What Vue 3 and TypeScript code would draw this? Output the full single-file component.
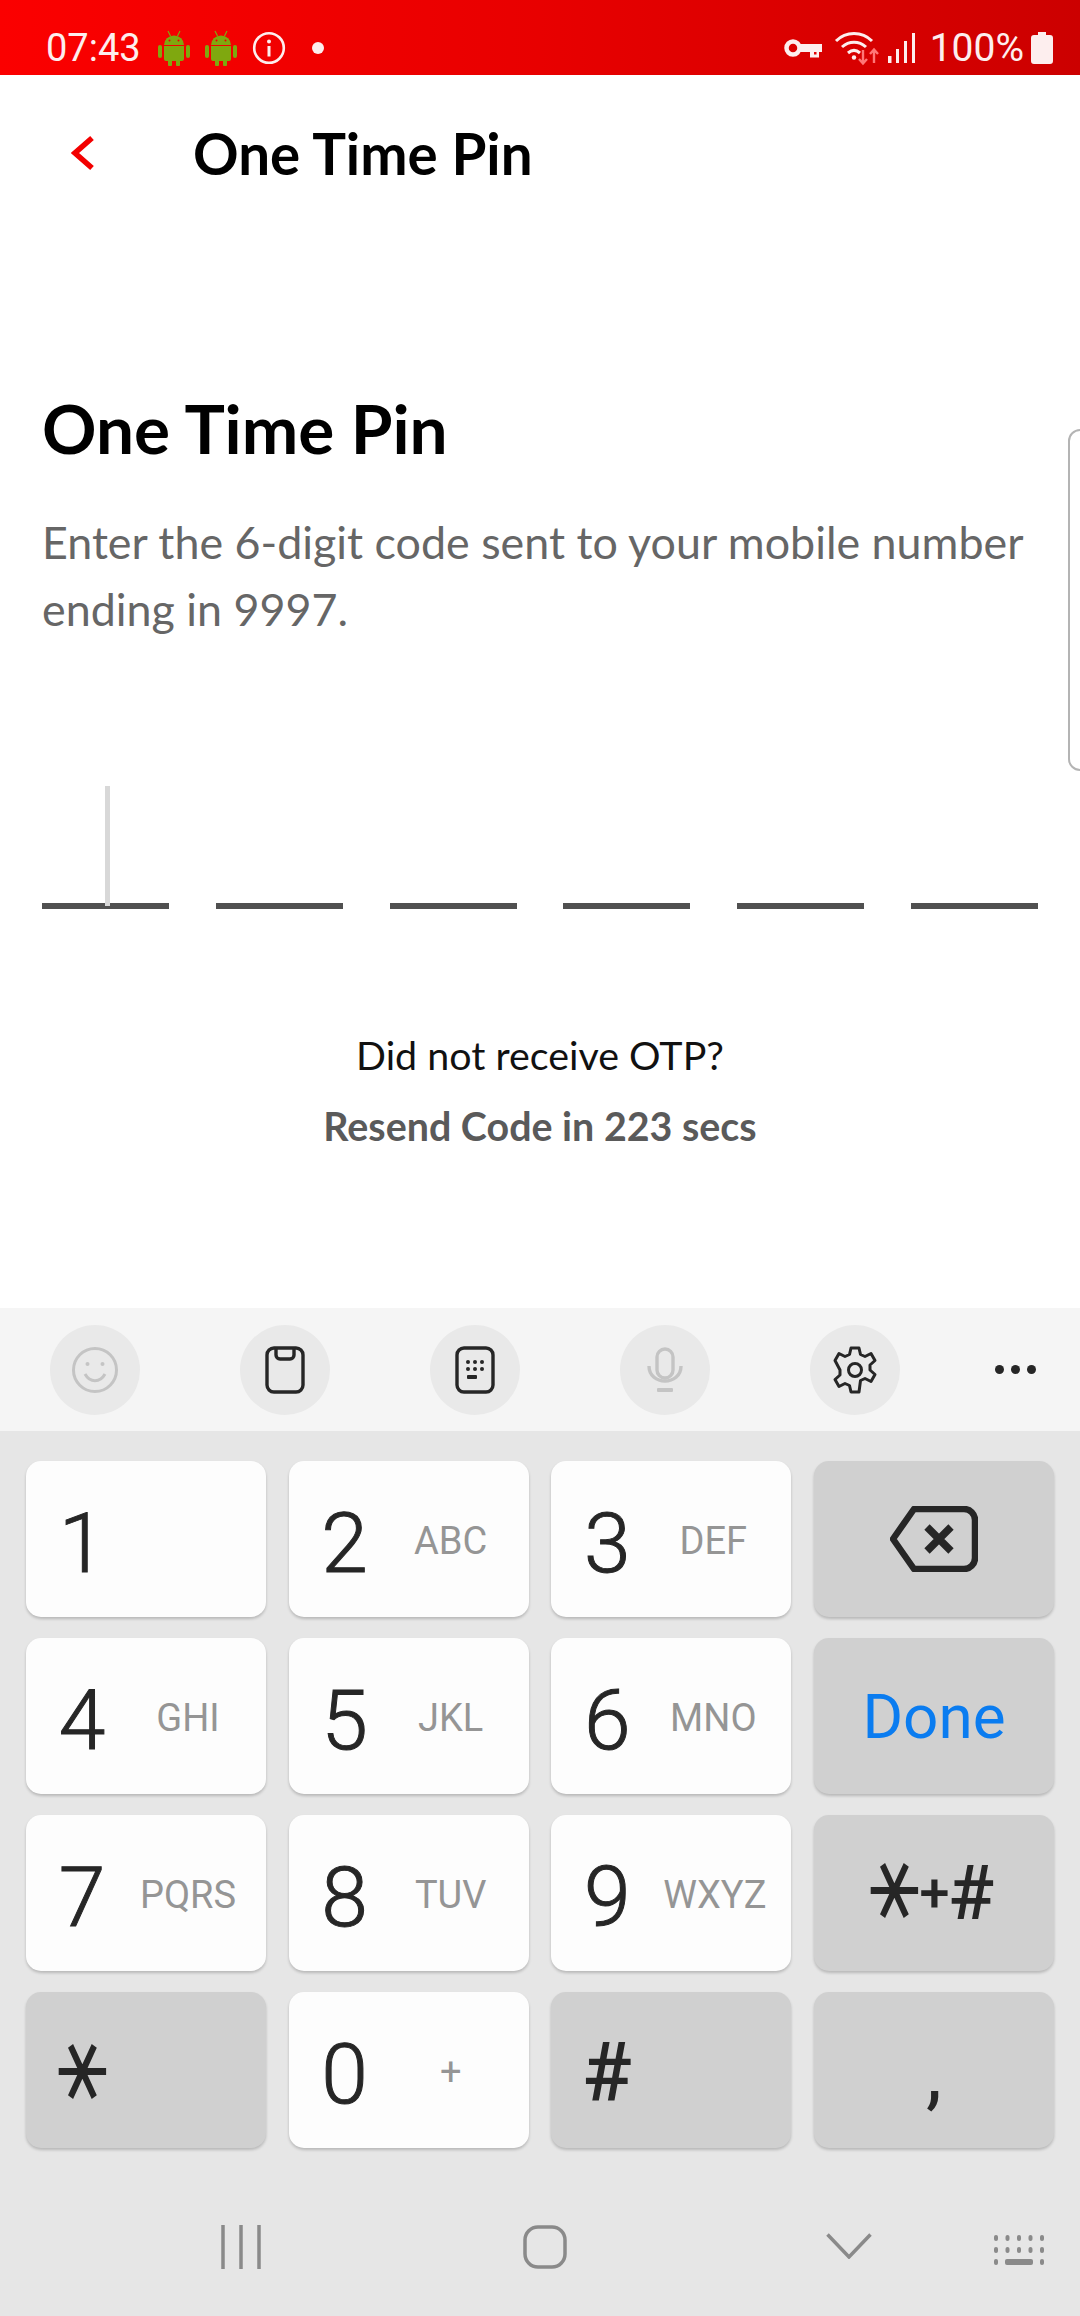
<script setup lang="ts">
interface Key { main: string; sub?: string }
const digitKeys: Key[] = [
  { main: '1' }, { main: '2', sub: 'ABC' }, { main: '3', sub: 'DEF' },
  { main: '4', sub: 'GHI' }, { main: '5', sub: 'JKL' }, { main: '6', sub: 'MNO' },
  { main: '7', sub: 'PQRS' }, { main: '8', sub: 'TUV' }, { main: '9', sub: 'WXYZ' },
]
const rows = digitKeys.reduce<Key[][]>((acc, k, i) => {
  if (i % 3 === 0) acc.push([])
  acc[acc.length - 1].push(k)
  return acc
}, [])
const slots = [0, 1, 2, 3, 4, 5]
</script>

<template>
  <div class="phone">
    <div class="status">
      <span class="time">07:43</span>
      <svg class="droid" viewBox="0 0 32 36" width="32" height="36" v-for="n in 2" :key="n">
        <path d="M10 1l2.500 5M22 1l-2.500 5" stroke="#7fa80f" stroke-width="1.200" fill="none" />
        <path d="M6 15a10 9.500 0 0 1 20 0z" fill="#7fa80f" />
        <circle cx="11.500" cy="10.500" r="1" fill="#e00" /><circle cx="20.500" cy="10.500" r="1" fill="#e00" />
        <path d="M6 16h20v13a2 2 0 0 1-2 2h-2v3.500a2 2 0 0 1-4 0V31h-4v3.500a2 2 0 0 1-4 0V31H8a2 2 0 0 1-2-2z" fill="#7fa80f" />
        <rect x="0" y="15" width="4" height="13" rx="2" fill="#7fa80f" /><rect x="28" y="15" width="4" height="13" rx="2" fill="#7fa80f" />
      </svg>
      <svg class="info" viewBox="0 0 34 34" width="34" height="34">
        <circle cx="17" cy="17" r="14.800" fill="none" stroke="#fdeeee" stroke-width="2.600" />
        <circle cx="17" cy="10.500" r="2" fill="#fdeeee" /><rect x="15.500" y="15" width="3" height="10.500" fill="#fdeeee" />
      </svg>
      <span class="dot"></span>
      <span class="grow"></span>
      <svg class="key-ic" viewBox="0 0 38 20" width="38" height="20">
        <circle cx="9" cy="10" r="6.500" fill="none" stroke="#fdeeee" stroke-width="4.500" />
        <path d="M15 6h23v8h-3v5.500h-9V14H15z" fill="#fdeeee" /><rect x="30" y="14" width="2.500" height="2.500" fill="#e20000" />
      </svg>
      <svg class="wifi" viewBox="0 0 46 36" width="46" height="36">
        <path d="M2 11C12 1 28 1 38 11M8 17c7-6.500 17-6.500 24 0M14 23c4-3.500 8-3.500 12 0" fill="none" stroke="#fdeeee" stroke-width="3" />
        <circle cx="20" cy="27.500" r="2.200" fill="#fdeeee" />
        <path d="M29 20v13M25 29l4 4.500 4-4.500M40 33V20M36 24l4-4.500 4 4.500" fill="none" stroke="#f77" stroke-width="2.400" />
      </svg>
      <svg class="signal" viewBox="0 0 28 32" width="28" height="32">
        <rect x="0" y="24" width="3.500" height="7" fill="#fdeeee" /><rect x="8" y="17" width="3" height="14" fill="#fdeeee" />
        <rect x="16" y="9" width="3" height="22" fill="#fdeeee" /><rect x="24" y="1" width="3" height="30" fill="#fdeeee" />
      </svg>
      <span class="pct">100%</span>
      <svg class="batt" viewBox="0 0 22 32" width="22" height="32">
        <path d="M7 0h8v3h4a3 3 0 0 1 3 3v23a3 3 0 0 1-3 3H3a3 3 0 0 1-3-3V6a3 3 0 0 1 3-3h4z" fill="#fdeeee" />
      </svg>
    </div>

    <header class="bar">
      <svg class="back" viewBox="0 0 24 36" width="24" height="36">
        <path d="M21 3L4 18l17 15" fill="none" stroke="#f30000" stroke-width="5.500" />
      </svg>
      <span class="bar-title">One Time Pin</span>
    </header>

    <main class="content">
      <h1 class="title">One Time Pin</h1>
      <p class="lead">Enter the 6-digit code sent to your mobile number<br />ending in 9997.</p>
      <div class="pins">
        <div class="pin" v-for="s in slots" :key="s"><i v-if="s === 0" class="caret"></i></div>
      </div>
      <p class="ask">Did not receive OTP?</p>
      <p class="resend">Resend Code in 223 secs</p>
      <div class="peek"></div>
    </main>

    <section class="kb">
      <div class="tools">
        <div class="slot"><span class="pill">
          <svg viewBox="0 0 46 48" width="46" height="48" fill="none" stroke="#c4c4c4" stroke-width="3">
            <circle cx="23" cy="24" r="21.500" /><path d="M13 28c5 9 15 9 20 0" />
            <circle cx="15.500" cy="18" r="2" fill="#c4c4c4" stroke="none" /><circle cx="30.500" cy="18" r="2" fill="#c4c4c4" stroke="none" />
          </svg></span></div>
        <div class="slot"><span class="pill">
          <svg viewBox="0 0 40 48" width="40" height="48" fill="none" stroke="#262626" stroke-width="3.400">
            <rect x="2" y="2" width="36" height="44" rx="7" /><path d="M11 2v7a4 4 0 0 0 4 4h10a4 4 0 0 0 4-4V2" />
          </svg></span></div>
        <div class="slot"><span class="pill">
          <svg viewBox="0 0 40 48" width="40" height="48" fill="none" stroke="#262626" stroke-width="3.400">
            <rect x="2" y="2" width="36" height="44" rx="7" />
            <g fill="#262626" stroke="none">
              <circle cx="13" cy="16" r="2" /><circle cx="20" cy="16" r="2" /><circle cx="27" cy="16" r="2" />
              <circle cx="13" cy="23" r="2" /><circle cx="20" cy="23" r="2" /><circle cx="27" cy="23" r="2" />
              <rect x="12" y="29" width="10" height="4" rx="1" />
            </g>
          </svg></span></div>
        <div class="slot"><span class="pill">
          <svg viewBox="0 0 36 46" width="36" height="46" fill="none" stroke="#c4c4c4" stroke-width="3.400">
            <rect x="10" y="2" width="16" height="29" rx="8" /><path d="M2 19c0 20 32 20 32 0" />
            <rect x="10" y="41" width="16" height="4" rx="1" fill="#c4c4c4" stroke="none" />
          </svg></span></div>
        <div class="slot"><span class="pill">
          <svg viewBox="0 0 48 48" width="48" height="48" fill="none" stroke="#262626" stroke-width="3">
            <path d="M20 2h8l1.500 6.500 4.500 2 6-3 4 7-5 4.500v5l5 4.500-4 7-6-3-4.500 2L28 46h-8l-1.500-6.500-4.500-2-6 3-4-7 5-4.500v-5L4 14.500l4-7 6 3 4.500-2z" stroke-linejoin="round" />
            <circle cx="24" cy="24" r="6.500" />
          </svg></span></div>
        <div class="slot more"><i></i><i></i><i></i></div>
      </div>

      <div class="grid">
        <template v-for="(row, ri) in rows" :key="ri">
          <button v-for="k in row" :key="k.main" class="key">
            <span class="n">{{ k.main }}</span><span class="s">{{ k.sub }}</span>
          </button>
          <button v-if="ri === 0" class="key dark center">
            <svg viewBox="0 0 88 66" width="88" height="66" fill="none" stroke="#262626" stroke-width="6.500" stroke-linejoin="round">
              <path d="M24 3h50a11 11 0 0 1 11 11v38a11 11 0 0 1-11 11H24L3 33z" />
              <path d="M37 21l24 24M61 21L37 45" stroke-width="7.500" />
            </svg>
          </button>
          <button v-if="ri === 1" class="key dark center done">Done</button>
          <button v-if="ri === 2" class="key dark center sym"><span class="star">⚹</span><span class="plus">+</span><span class="hash2">#</span></button>
        </template>
        <button class="key dark"><span class="n"><span class="star">⚹</span></span></button>
        <button class="key"><span class="n">0</span><span class="s">+</span></button>
        <button class="key dark"><span class="n hash">#</span></button>
        <button class="key dark center"><span class="comma">,</span></button>
      </div>

      <nav class="nav">
        <svg class="n1" viewBox="0 0 40 44" width="40" height="44" stroke="#8a8a8a" stroke-width="3.500">
          <path d="M2 0v44M20 0v44M38 0v44" />
        </svg>
        <svg class="n2" viewBox="0 0 44 44" width="44" height="44" fill="none" stroke="#8a8a8a" stroke-width="3.500">
          <rect x="2" y="2" width="40" height="40" rx="13" />
        </svg>
        <svg class="n3" viewBox="0 0 46 26" width="46" height="26" fill="none" stroke="#8a8a8a" stroke-width="3.500">
          <path d="M1.500 1.500L23 24 44.500 1.500" />
        </svg>
        <svg class="n4" viewBox="0 0 52 30" width="52" height="30" fill="#8a8a8a">
          <g>
            <rect v-for="c in 5" :key="'a' + c" :x="(c - 1) * 11.500" y="0" width="4" height="6" rx="2" />
            <rect v-for="c in 5" :key="'b' + c" :x="(c - 1) * 11.500" y="12" width="4" height="6" rx="2" />
            <rect x="0" y="24" width="4" height="6" rx="2" /><rect x="46" y="24" width="4" height="6" rx="2" />
            <rect x="11" y="24" width="28" height="6" rx="2" />
          </g>
        </svg>
      </nav>
    </section>
  </div>
</template>

<style>
html, body { margin: 0; background: #fff; }
</style>

<style scoped>
.phone { width: 1080px; height: 2316px; display: flex; flex-direction: column; background: #fff; overflow: hidden; font-family: Lato, sans-serif; }
.status { height: 75px; flex: none; display: flex; align-items: center; padding: 20px 27px 0 46px; box-sizing: border-box; background: linear-gradient(90deg, #fb0000 0%, #e80000 50%, #cc0000 100%); color: #fdeeee; font-family: Roboto, sans-serif; }
.time { font-size: 38px; width: 112px; }
.droid + .droid { margin-left: 15px; }
.info { margin-left: 15px; }
.dot { width: 12px; height: 12px; border-radius: 50%; background: #fdeeee; margin-left: 26px; }
.grow { flex: 1; }
.wifi { margin-left: 12px; }
.signal { margin-left: 8px; }
.pct { font-size: 39px; margin-left: 14px; }
.batt { margin-left: 7px; }
.bar { height: 158px; flex: none; display: flex; align-items: center; padding-left: 71px; box-sizing: border-box; }
.back { margin-top: -3px; }
.bar-title { margin-left: 98px; font-size: 56.500px; font-weight: 700; color: #000; margin-top: -2px; }
.content { flex: 1; position: relative; padding: 0 42px; }
.title { margin: 155px 0 0; font-size: 67.500px; line-height: 80px; font-weight: 700; color: #000; }
.lead { margin: 41px 0 0; font-size: 44.800px; line-height: 67px; color: #666; }
.pins { display: flex; justify-content: space-between; margin-top: 141px; width: 996px; }
.pin { width: 127px; height: 125px; border-bottom: 6px solid #505050; position: relative; box-sizing: border-box; }
.caret { position: absolute; left: 63px; top: 2px; width: 5px; height: 120px; background: #d8d8d8; }
.ask { margin: 0; margin-top: 121px; text-align: center; font-size: 39.400px; line-height: 50px; color: #111; }
.resend { margin: 21px 0 0; text-align: center; font-size: 39.400px; line-height: 50px; font-weight: 700; color: #5a5a5a; }
.peek { position: absolute; right: -18px; top: 196px; width: 30px; height: 342px; border: 2px solid #b4b4b4; border-radius: 12px; box-sizing: border-box; }
.kb { flex: none; background: #e6e6e6; }
.tools { height: 123px; display: flex; background: #f5f5f5; }
.slot { width: 190px; display: flex; align-items: center; justify-content: center; }
.pill { width: 90px; height: 90px; border-radius: 50%; background: #e9e9e9; display: flex; align-items: center; justify-content: center; }
.more { width: 130px; gap: 6px; }
.more i { width: 9px; height: 9px; border-radius: 50%; background: #262626; margin-left: 1px; }
.grid { display: grid; grid-template-columns: repeat(4, 240px); grid-auto-rows: 156px; gap: 21px 22.670px; padding: 30px 26px 0; }
.key { border: 0; padding: 0; background: #fdfdfd; border-radius: 15px; box-shadow: 0 2px 3px rgba(0, 0, 0, .2); display: grid; grid-template-columns: 112px 100px; align-items: center; color: #262626; font-family: Roboto, sans-serif; }
.key.dark { background: #d0d0d0; }
.key.center { display: flex; justify-content: center; }
.n { font-size: 84px; font-weight: 300; -webkit-text-stroke: 1px #262626; text-align: center; line-height: 1; padding-top: 10px; }
.s { font-size: 38px; font-weight: 400; color: #959595; text-align: center; padding-top: 3px; }
.done { font-size: 62px; color: #0a7cf0; font-weight: 400; }
.hash { font-weight: 500; font-size: 82px; -webkit-text-stroke: 0; padding-top: 4px; }
.sym { align-items: center; }
.star { font-family: "DejaVu Sans", sans-serif; font-size: 68px; line-height: 1; display: inline-block; -webkit-text-stroke: 0; transform: translateY(-18px) scale(1.25, 1.58); }
.sym .star { transform: translateY(-12px) scale(1.25, 1.58); margin-right: 5px; }
.plus { font-size: 54px; font-weight: 500; line-height: 1; }
.hash2 { font-size: 76px; font-weight: 500; line-height: 1; margin-left: -1px; }
.comma { font-size: 81px; font-weight: 400; line-height: 1; padding-top: 4px; }
.nav { height: 168px; box-sizing: border-box; position: relative; display: flex; align-items: flex-start; padding-top: 77px; }
.n1 { margin-left: 221px; }
.n2 { margin-left: 262px; }
.n3 { margin-left: 259px; margin-top: 8px; }
.n4 { margin-left: 122px; margin-top: 10px; }
</style>
